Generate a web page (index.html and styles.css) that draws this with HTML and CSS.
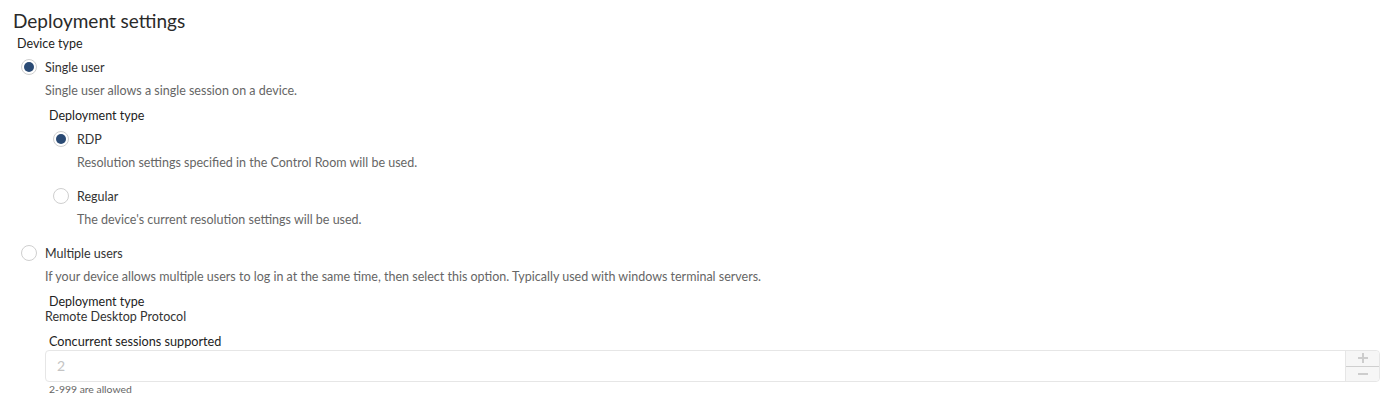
FILE: index.html
```html
<!DOCTYPE html>
<html>
<head>
  <title>Deployment settings</title>
  <link rel="stylesheet" href="styles.css">
</head>
<body>
  <h2 class="title">Deployment settings</h2>

  <div class="field-label first">Device type</div>

  <div class="option">
    <label class="radio-row">
      <span class="radio checked"></span>
      <span class="radio-text">Single user</span>
    </label>
    <div class="hint">Single user allows a single session on a device.</div>

    <div class="sub">
      <div class="field-label">Deployment type</div>
      <div class="option">
        <label class="radio-row">
          <span class="radio checked"></span>
          <span class="radio-text">RDP</span>
        </label>
        <div class="hint">Resolution settings specified in the Control Room will be used.</div>
      </div>
      <div class="option">
        <label class="radio-row">
          <span class="radio"></span>
          <span class="radio-text">Regular</span>
        </label>
        <div class="hint">The device's current resolution settings will be used.</div>
      </div>
    </div>
  </div>

  <div class="option">
    <label class="radio-row">
      <span class="radio"></span>
      <span class="radio-text">Multiple users</span>
    </label>
    <div class="hint">If your device allows multiple users to log in at the same time, then select this option. Typically used with windows terminal servers.</div>

    <div class="multi">
      <div class="field-label">Deployment type</div>
      <div class="value">Remote Desktop Protocol</div>

      <div class="field-label concurrent">Concurrent sessions supported</div>
      <div class="number-input">
        <span class="number-value">2</span>
        <div class="stepper">
          <span class="step plus" title="Increase"></span>
          <span class="step minus" title="Decrease"></span>
        </div>
      </div>
      <div class="small-hint">2-999 are allowed</div>
    </div>
  </div>
</body>
</html>
```

FILE: styles.css
```css
body {
  margin: 0;
  padding: 10px 14px 0 13px;
  font-family: Lato, "Open Sans", sans-serif;
  color: #333;
  background-color: white;
}
.title {
  margin: 0;
  font-size: 19px;
  font-weight: normal;
  color: #2a2a2a;
  line-height: 21px;
}
.field-label {
  font-size: 12.5px;
  color: #222;
  line-height: 16px;
  margin: 6px 0 0 4px;
}
.field-label.first {
  margin-top: 5px;
}
.option {
  margin-top: 6px;
}
.radio-row {
  display: flex;
  align-items: center;
  gap: 8px;
  margin-left: 8px;
  height: 18px;
}
/* Radio circle */
.radio {
  width: 14px;
  height: 14px;
  border: 1px solid #cfcfcf;
  border-radius: 50%;
  display: flex;
  align-items: center;
  justify-content: center;
  background-color: white;
}
.radio.checked::after {
  content: "";
  width: 10px;
  height: 10px;
  border-radius: 50%;
  background-color: #2a4a74;
}
.radio-text {
  font-size: 12.5px;
  color: #333;
}
.hint {
  font-size: 12.5px;
  color: #666;
  margin: 7px 0 0 32px;
  line-height: 16px;
}
.sub {
  margin-left: 32px;
  margin-top: 9px;
}
.sub .field-label {
  margin-left: 4px;
}
.sub .option {
  margin-top: 6px;
}
.sub .option + .option {
  margin-top: 16px;
}
.option + .option {
  margin-top: 16px;
}
.multi {
  margin-left: 32px;
  margin-top: 10px;
}
.multi .field-label {
  margin-top: 0;
  line-height: 14px;
}
.value {
  font-size: 12.5px;
  color: #333;
  line-height: 15px;
}
.concurrent {
  margin-top: 10px !important;
  font-size: 12.7px !important;
}
/* Number input */
.number-input {
  display: flex;
  align-items: stretch;
  border: 1px solid #e6e6e6;
  border-radius: 4px;
  height: 30px;
  margin-top: 2px;
}
.number-value {
  flex: 1;
  padding-left: 11px;
  font-size: 14px;
  color: #c4c4c4;
  line-height: 30px;
}
.stepper {
  width: 33px;
  display: flex;
  flex-direction: column;
  background-color: #f6f6f6;
  border-left: 1px solid #e6e6e6;
  border-radius: 0 4px 4px 0;
}
.step {
  flex: 1;
  display: grid;
  place-items: center;
}
.step + .step {
  border-top: 1px solid #cfcfcf;
}
/* plus / minus drawn as bars */
.step::before,
.plus::after {
  content: "";
  grid-area: 1 / 1;
  width: 10px;
  height: 2px;
  background-color: #cdcdcd;
}
.plus::after {
  width: 2px;
  height: 10px;
}
.small-hint {
  font-size: 10.4px;
  color: #666;
  margin: 1px 0 0 4px;
}
```
